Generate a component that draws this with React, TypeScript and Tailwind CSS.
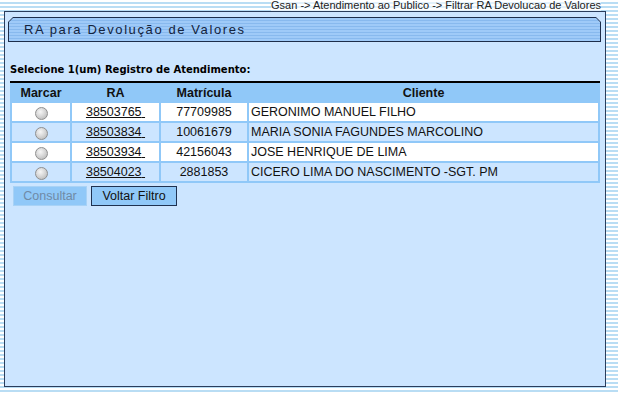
import React from "react";

const rows = [
  { ra: "38503765", mat: "77709985", cli: "GERONIMO MANUEL FILHO", bg: "bg-white" },
  { ra: "38503834", mat: "10061679", cli: "MARIA SONIA FAGUNDES MARCOLINO", bg: "bg-[#cce5ff]" },
  { ra: "38503934", mat: "42156043", cli: "JOSE HENRIQUE DE LIMA", bg: "bg-white" },
  { ra: "38504023", mat: "2881853", cli: "CICERO LIMA DO NASCIMENTO -SGT. PM", bg: "bg-[#cce5ff]" },
];

function Radio() {
  return (
    <span className="inline-block w-[13px] h-[13px] rounded-full border border-[#8f8f8f] bg-[radial-gradient(circle_at_40%_35%,#f6f6f6_0%,#d8d8d8_45%,#b0b0b0_100%)] align-middle" />
  );
}

export default function App() {
  return (
    <div
      className="w-[618px] h-[393px] overflow-hidden bg-[repeating-linear-gradient(to_bottom,#ffffff_0px,#ffffff_2px,#b9ddf4_2px,#b9ddf4_4px)]"
      style={{ fontFamily: "'Liberation Sans', Arial, sans-serif" }}
    >
      <div className="h-[11px] leading-[11px] text-[11px] text-[#222] text-right pr-[17px] whitespace-nowrap">
        <span className="bg-white/60">Gsan -&gt; Atendimento ao Publico -&gt; Filtrar RA Devolucao de Valores</span>
      </div>
      <div className="ml-[4px] w-[602px] h-[376px] border border-[#2a3d5c] bg-[#cce5ff] pt-[5px] pl-[3px] pr-[4px]">
        <div className="h-[25px] bg-[#1d2e4b] p-px [clip-path:polygon(5px_0,calc(100%_-_5px)_0,100%_5px,100%_100%,0_100%,0_5px)]">
          <div className="h-full flex items-center pl-[15px] bg-[repeating-linear-gradient(to_bottom,#9fcaf8_0px,#9fcaf8_2px,#88b9ee_2px,#88b9ee_3px)] [clip-path:polygon(4px_0,calc(100%_-_4px)_0,100%_4px,100%_100%,0_100%,0_4px)]">
            <span className="text-[13px] tracking-[1.6px] text-[#13233d] leading-none whitespace-nowrap">
              RA para Devolução de Valores
            </span>
          </div>
        </div>
        <div
          className="mt-[21px] ml-[2px] text-[10px] leading-[14px] font-bold text-black whitespace-nowrap"
          style={{ fontFamily: "'DejaVu Sans', Verdana, sans-serif" }}
        >
          Selecione 1(um) Registro de Atendimento:
        </div>
        <table className="ml-[2px] mt-[4px] w-[590px] table-fixed border-separate border-spacing-[2px] bg-[#90c8f8] border-t-2 border-black text-[12.5px] text-[#111]">
          <colgroup>
            <col className="w-[58px]" />
            <col className="w-[87px]" />
            <col className="w-[86px]" />
            <col />
          </colgroup>
          <thead>
            <tr className="h-[16px]">
              <th className="font-bold text-center leading-[14px] p-0">Marcar</th>
              <th className="font-bold text-center leading-[14px] p-0">RA</th>
              <th className="font-bold text-center leading-[14px] p-0">Matrícula</th>
              <th className="font-bold text-center leading-[14px] p-0">Cliente</th>
            </tr>
          </thead>
          <tbody>
            {rows.map((r) => (
              <tr key={r.ra} className="h-[18px]">
                <td className={`${r.bg} text-center p-0 pt-[2px] leading-[14px]`}>
                  <Radio />
                </td>
                <td className={`${r.bg} text-center p-0 leading-[14px]`}>
                  <span className="underline">{r.ra}&nbsp;</span>
                </td>
                <td className={`${r.bg} text-center p-0 leading-[14px]`}>{r.mat}</td>
                <td className={`${r.bg} text-left p-0 pl-[2px] leading-[14px] whitespace-nowrap`}>{r.cli}</td>
              </tr>
            ))}
          </tbody>
        </table>
        <div className="flex gap-[4px] ml-[5px] mt-[3px]">
          <button className="w-[74px] h-[20px] bg-[#90c8f8] border border-[#a8d2f6] text-[12.5px] text-[#6f8aa6] leading-none">
            Consultar
          </button>
          <button className="w-[86px] h-[20px] bg-[#90c8f8] border border-[#1f3150] text-[12.5px] text-[#111] leading-none">
            Voltar Filtro
          </button>
        </div>
      </div>
    </div>
  );
}
